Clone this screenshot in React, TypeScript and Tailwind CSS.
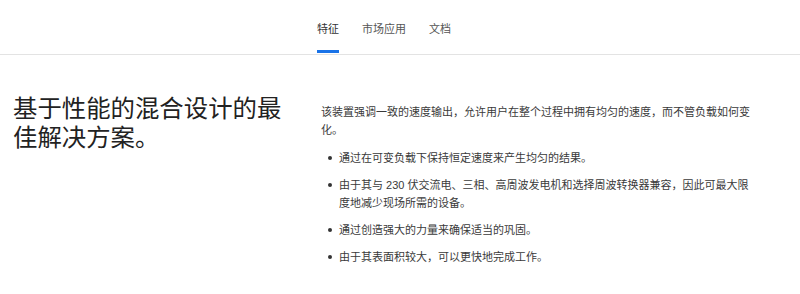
import React from 'react';

const tabs = ['特征', '市场应用', '文档'];

const points = [
  '通过在可变负载下保持恒定速度来产生均匀的结果。',
  '由于其与 230 伏交流电、三相、高周波发电机和选择周波转换器兼容，因此可最大限度地减少现场所需的设备。',
  '通过创造强大的力量来确保适当的巩固。',
  '由于其表面积较大，可以更快地完成工作。',
];

const font = { fontFamily: '"Liberation Sans", "Noto Sans CJK SC", sans-serif' };

export default function App() {
  return (
    <div className="w-[800px] h-[294px] bg-white overflow-hidden" style={font}>
      <nav className="flex h-[55px] border-b border-[#e3e3e3] pl-[317px] gap-[23px]">
        {tabs.map((t, i) => (
          <div key={t} className="flex flex-col justify-end">
            <span className={`text-[11px] leading-[14px] ${i === 0 ? 'text-[#333]' : 'text-[#555]'}`}>{t}</span>
            <span className={`mt-[14px] h-[3px] mb-[1px] ${i === 0 ? 'bg-[#1a73e8]' : 'bg-transparent'}`} />
          </div>
        ))}
      </nav>

      <main className="flex pt-[39px]">
        <div className="w-[308px] pl-[13px]">
          <h1 className="w-[286px] text-[24.4px] leading-[29px] text-[#222] font-normal">
            基于性能的混合设计的最佳解决方案。
          </h1>
        </div>
        <div className="w-[436px] ml-[13px] pt-[9px] text-[11px] leading-[18px] text-[#3a3a3a]">
          <p>该装置强调一致的速度输出，允许用户在整个过程中拥有均匀的速度，而不管负载如何变化。</p>
          <ul className="mt-[10px] flex flex-col gap-[9px]">
            {points.map((p) => (
              <li key={p} className="flex">
                <span className="w-[18px] shrink-0 flex pt-[7px] pl-[7px]">
                  <span className="w-[4px] h-[4px] rounded-full bg-[#333]" />
                </span>
                <span>{p}</span>
              </li>
            ))}
          </ul>
        </div>
      </main>
    </div>
  );
}
